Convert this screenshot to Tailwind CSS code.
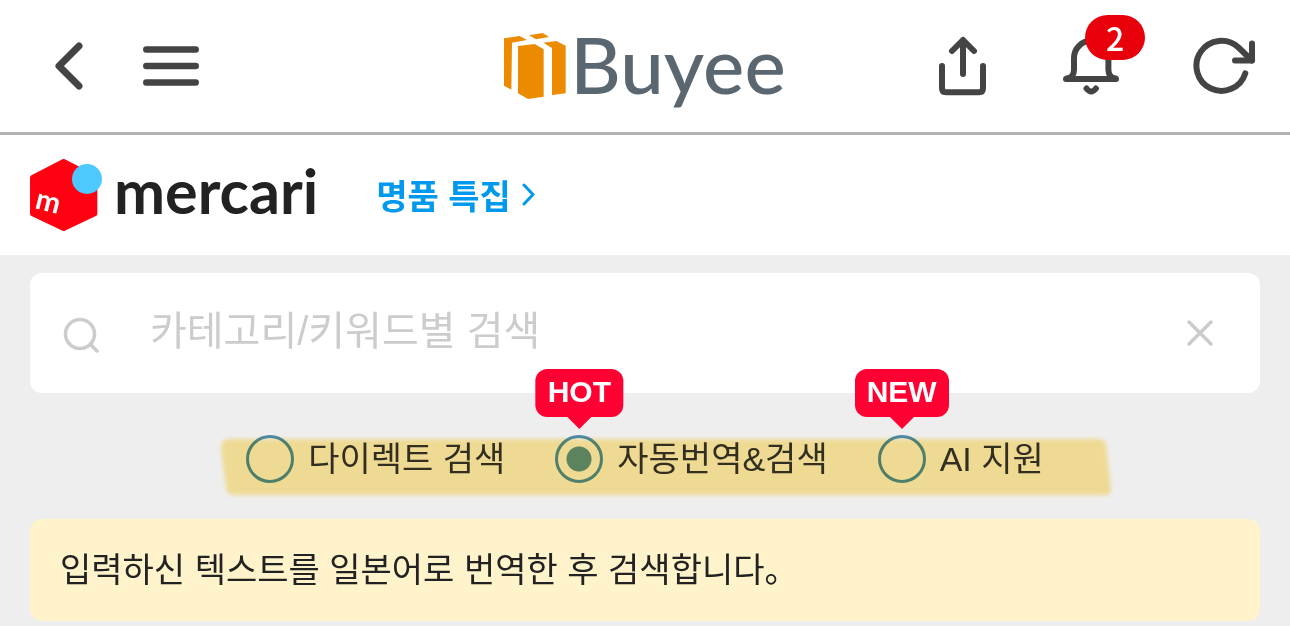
<!DOCTYPE html>
<html lang="ko">
<head>
  <meta charset="UTF-8" />
  <meta name="viewport" content="width=device-width, initial-scale=1.0" />
  <title>Buyee - mercari</title>
  <script src="https://cdn.jsdelivr.net/npm/@tailwindcss/browser@4"></script>
</head>
<body class="bg-[#eeeeee] min-h-screen font-['Noto_Sans_CJK_KR',sans-serif] text-[#222222]">
  <!-- Header -->
  <header class="grid grid-cols-[1fr_auto_1fr] items-center h-[135px] bg-white border-b-3 border-[#b2b2b2] text-[#444444]">
    <div class="flex items-center gap-[60px] pl-[55px]">
      <button type="button" aria-label="뒤로">
        <svg class="w-7 h-12" viewBox="0 0 28 48" fill="none" stroke="currentColor" stroke-width="7" stroke-linecap="round" stroke-linejoin="round">
          <path d="M24 4L4 24l20 20" />
        </svg>
      </button>
      <button type="button" aria-label="메뉴">
        <svg class="w-14 h-12" viewBox="0 0 56 48" fill="none" stroke="currentColor" stroke-width="6.5" stroke-linecap="round">
          <path d="M3.3 7.5h49.4M3.3 24h49.4M3.3 40.5h49.4" />
        </svg>
      </button>
    </div>

    <a href="#" class="flex items-center gap-1" aria-label="Buyee">
      <svg class="w-[62px] h-[66px]" viewBox="18 15 186 198" fill="#ed8b00">
        <path d="M18 31L65 24L87 36L42 44L40 185L18 173Z" />
        <path d="M93 22L134 15L153 27L114 34Z" />
        <path d="M60 54L110 48L137 64V206L90 213L60 196Z" />
        <path d="M136 44L175 39L203 53V196L162 201V60Z" />
      </svg>
      <span class="font-[Lato] font-medium text-[78px] leading-[84px] pb-1 text-[#5b6770]">Buyee</span>
    </a>

    <div class="flex items-center justify-end gap-[74px] pr-[33px]">
      <button type="button" aria-label="공유">
        <svg class="w-[52px] h-[64px]" viewBox="935 34 52 64" fill="none" stroke="currentColor" stroke-width="6" stroke-linecap="round" stroke-linejoin="round">
          <path d="M961 74V40M950 51l11-11 11 11" />
          <path d="M940 66v22.3q0 4 4 4h33q4 0 4-4V66" />
        </svg>
      </button>
      <button type="button" class="relative" aria-label="알림">
        <svg class="w-[56px] h-[64px]" viewBox="1064 34 56 64" fill="none" stroke="currentColor" stroke-width="6" stroke-linecap="round" stroke-linejoin="round">
          <path d="M1067 79h50M1068 78.5q7-1 7-9V58a17.2 17.2 0 0 1 34.4 0v11.5q0 8 7 9" />
          <path d="M1087.5 88.5q4.7 6 9.4 0" />
        </svg>
        <span class="absolute -top-[19px] left-[22px] w-[60px] h-[45px] rounded-full bg-[#e8000b] text-white text-[32px] leading-[45px] text-center font-medium">2</span>
      </button>
      <button type="button" aria-label="새로고침">
        <svg class="w-[64px] h-[64px]" viewBox="1192 34 64 64" fill="none" stroke="currentColor" stroke-width="6" stroke-linecap="round" stroke-linejoin="round">
          <path d="M1244.3 73.3A25 25 0 1 1 1237.5 47.5L1251 60.5" />
          <path d="M1251 43.5v17h-17" />
        </svg>
      </button>
    </div>
  </header>

  <!-- Shop -->
  <section class="flex items-center gap-[58px] h-[120px] px-[30px] bg-white">
    <a href="#" class="flex items-center gap-3 text-[#222222]" aria-label="mercari">
      <svg class="w-[72px] h-[72px]" viewBox="30 27 216 216">
        <path d="M131 35L224 83V191L131 235L38 191V83Z" fill="#ff0211" stroke="#ff0211" stroke-width="16" stroke-linejoin="round" />
        <circle cx="201" cy="87" r="45" fill="#4dc9ff" />
        <text x="42" y="174" transform="rotate(14 42 174)" class="font-[Lato] font-bold text-[88px]" fill="#ffffff">m</text>
      </svg>
      <span class="font-[Lato] font-bold text-[61px] leading-[72px] pb-2">mercari</span>
    </a>
    <a href="#" class="flex items-center gap-[10px] text-[34px] leading-[48px] font-bold text-[#0099ee]">
      명품 특집
      <svg class="w-[16px] h-6" viewBox="521 183 16 24" fill="none" stroke="currentColor" stroke-width="3" stroke-linecap="round" stroke-linejoin="round">
        <path d="M524 185l9 9.500-9 9.500" />
      </svg>
    </a>
  </section>

  <!-- Search -->
  <main class="px-[30px] pt-[18px]">
    <form onsubmit="return false">
      <div class="flex items-center h-[120px] pl-8 pr-11 bg-white rounded-xl text-[#cccccc]">
        <svg class="w-10 h-10" viewBox="61 313 40 40" fill="none" stroke="currentColor" stroke-width="3.5" stroke-linecap="round">
          <circle cx="79" cy="334" r="14.5" />
          <path d="M90 345l6 6" />
        </svg>
        <input type="text" id="keyword" aria-label="검색어" placeholder="카테고리/키워드별 검색" class="flex-1 min-w-0 ml-12 h-16 pb-1 font-['Liberation_Sans','Noto_Sans_CJK_KR',sans-serif] text-[40px] text-[#222222] placeholder:text-[#cccccc] outline-none" />
        <button type="button" aria-label="지우기">
          <svg class="w-8 h-8" viewBox="1184 317 32 32" fill="none" stroke="currentColor" stroke-width="3.5" stroke-linecap="round">
            <path d="M1189 322l22 22M1211 322l-22 22" />
          </svg>
        </button>
      </div>

      <div class="relative flex justify-center gap-[50px] pt-[42px] pb-9 font-['Liberation_Sans','Noto_Sans_CJK_KR',sans-serif] text-[34px] leading-[48px] text-[#333333]">
        <label class="flex items-center gap-[14px]">
          <input type="radio" name="mode" class="appearance-none size-12 rounded-full border-3 border-[#4f8aad]" />
          다이렉트 검색
        </label>
        <label class="relative flex items-center gap-[14px]">
          <input type="radio" name="mode" checked class="appearance-none size-12 rounded-full border-3 border-[#4f8aad] checked:bg-radial checked:from-[#5d8f98] checked:from-[12px] checked:to-transparent checked:to-[13px]" />
          자동번역&amp;검색
          <span class="absolute bottom-[66px] left-6 -translate-x-1/2 h-12 px-3 rounded-xl bg-[#ff0033] font-bold text-[30px] leading-[46px] text-white">HOT
            <i class="absolute top-12 left-1/2 -translate-x-1/2 border-x-12 border-t-12 border-x-transparent border-t-[#ff0033]"></i>
          </span>
        </label>
        <label class="relative flex items-center gap-[14px]">
          <input type="radio" name="mode" class="appearance-none size-12 rounded-full border-3 border-[#4f8aad]" />
          AI 지원
          <span class="absolute bottom-[66px] left-6 -translate-x-1/2 h-12 px-3 rounded-xl bg-[#ff0033] font-bold text-[30px] leading-[46px] text-white">NEW
            <i class="absolute top-12 left-1/2 -translate-x-1/2 border-x-12 border-t-12 border-x-transparent border-t-[#ff0033]"></i>
          </span>
        </label>
        <!-- marker stroke over the options -->
        <svg class="absolute top-[42px] left-1/2 -translate-x-1/2 w-[900px] h-[64px] ml-[22px] mix-blend-multiply pointer-events-none" viewBox="0 0 900 64">
          <path d="M12 4H882Q888 4 889 10L894 54Q894 60 888 60H16Q10 60 9 52L4 14Q4 4 12 4Z" fill="#ffea9d" class="blur-[2px]" />
        </svg>
      </div>
    </form>

    <p class="px-[30px] pt-[25px] pb-[29px] rounded-xl bg-[#fef3ca] text-[34px] leading-[48px]">입력하신 텍스트를 일본어로 번역한 후 검색합니다。</p>
  </main>
</body>
</html>
